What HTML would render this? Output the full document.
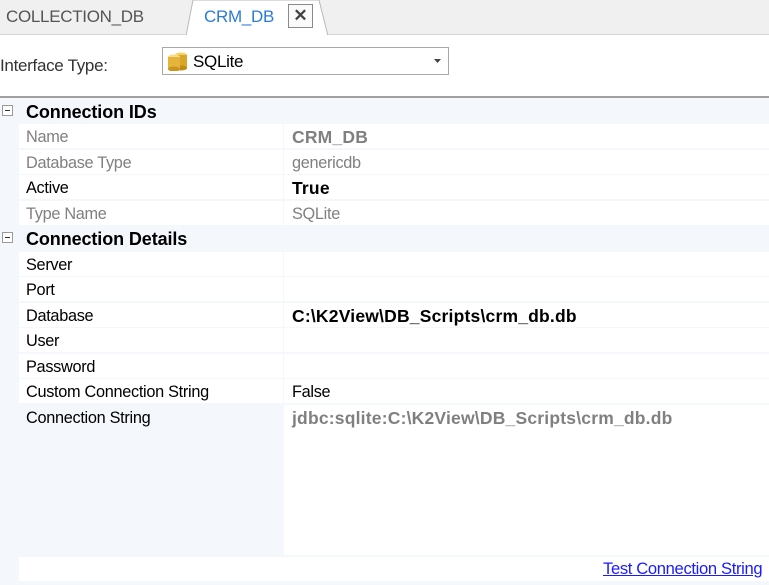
<!DOCTYPE html>
<html><head><style>
*{margin:0;padding:0;box-sizing:border-box}
body{width:769px;height:585px;background:#fff;font-family:"Liberation Sans",sans-serif;position:relative;overflow:hidden;color:#000}
.abs{position:absolute}
.tabbar{left:0;top:0;width:769px;height:35px;background:#f0f0f0;border-bottom:1px solid #d4d4d4}
.t{font-size:17px;letter-spacing:-0.3px;white-space:nowrap}
.grid{left:0;top:98px;width:769px;height:487px;background:#f4f7fb}
.row{position:absolute;left:19px;width:750px;height:24px}
.lab{position:absolute;left:0;top:0;width:264px;height:24px;background:#fff;padding-left:7px;line-height:26px;font-size:16.3px;letter-spacing:-0.3px;white-space:nowrap}
.val{position:absolute;left:265px;top:0;width:485px;height:24px;background:#fff;padding-left:8px;line-height:26px;font-size:16.3px;letter-spacing:-0.3px;white-space:nowrap}
.b{font-weight:bold;font-size:17.5px;letter-spacing:0.2px}
.cat{position:absolute;left:0;width:769px;height:24px;font-weight:bold;font-size:18px;line-height:26px;padding-left:26px;letter-spacing:-0.1px}
.box{position:absolute;left:2px;top:6px;width:11px;height:11px;border:1px solid #9a9a9a;background:#fff}
.box:after{content:"";position:absolute;left:2px;top:4px;width:5px;height:1px;background:#333}
.g{color:#808080}
</style></head><body>
<div class="abs tabbar"></div>
<div class="abs t" style="left:6px;top:7px;color:#555">COLLECTION_DB</div>
<svg class="abs" style="left:186px;top:0" width="150" height="36"><path d="M0 36 L7 0 L133 0 L142 36" fill="#fff" stroke="#b9b9b9"/><rect x="0" y="35" width="143" height="2" fill="#fff"/></svg>
<div class="abs t" style="left:204px;top:7px;color:#2b7bd6">CRM_DB</div>
<div class="abs" style="left:288px;top:4px;width:25px;height:24px;border:1px solid #8a8a8a;background:#fafafa;font-weight:bold;font-size:17px;line-height:22px;text-align:center;color:#444">✕</div>
<div class="abs t" style="left:0;top:56px;color:#333">Interface Type:</div>
<div class="abs" style="left:162px;top:47px;width:287px;height:28px;border:1px solid #a8a8a8;background:#fff"></div>
<svg class="abs" style="left:166px;top:51px" width="24" height="20"><ellipse cx="15" cy="4" rx="6" ry="2.5" fill="#f3d26a"/><rect x="9" y="4" width="12" height="13" fill="#d9a62a"/><ellipse cx="15" cy="17" rx="6" ry="2.5" fill="#c08a18"/><ellipse cx="8" cy="6" rx="6" ry="2.5" fill="#f7de86"/><rect x="2" y="6" width="12" height="12" fill="#e4b53a"/><ellipse cx="8" cy="18" rx="6" ry="2.5" fill="#c99520"/></svg>
<div class="abs t" style="left:193px;top:52px">SQLite</div>
<svg class="abs" style="left:434px;top:59px" width="8" height="5"><path d="M0 0H7L3.5 4Z" fill="#444"/></svg>
<div class="abs" style="left:0;top:96px;width:769px;height:2px;background:#a0a0a0"></div>
<div class="abs grid"></div>
<div class="cat" style="top:99px"><span class="box"></span>Connection IDs</div>
<div class="row" style="top:124px"><div class="lab g">Name</div><div class="val g b">CRM_DB</div></div>
<div class="row" style="top:150px"><div class="lab g">Database Type</div><div class="val g">genericdb</div></div>
<div class="row" style="top:175px"><div class="lab">Active</div><div class="val b">True</div></div>
<div class="row" style="top:201px"><div class="lab g">Type Name</div><div class="val g">SQLite</div></div>
<div class="cat" style="top:226px"><span class="box"></span>Connection Details</div>
<div class="row" style="top:252px"><div class="lab">Server</div><div class="val"></div></div>
<div class="row" style="top:277px"><div class="lab">Port</div><div class="val"></div></div>
<div class="row" style="top:303px"><div class="lab">Database</div><div class="val b">C:\K2View\DB_Scripts\crm_db.db</div></div>
<div class="row" style="top:328px"><div class="lab">User</div><div class="val"></div></div>
<div class="row" style="top:354px"><div class="lab">Password</div><div class="val"></div></div>
<div class="row" style="top:379px"><div class="lab">Custom Connection String</div><div class="val">False</div></div>
<div class="row" style="top:405px;height:150px"><div class="lab" style="background:transparent">Connection String</div><div class="val g b" style="height:150px">jdbc:sqlite:C:\K2View\DB_Scripts\crm_db.db</div></div>
<div class="abs" style="left:19px;top:557px;width:750px;height:24px;background:#fff"></div>
<div class="abs" style="left:603px;top:559px;font-size:16.6px;letter-spacing:-0.35px;color:#1a1aff;text-decoration:underline;white-space:nowrap">Test Connection String</div>
</body></html>
